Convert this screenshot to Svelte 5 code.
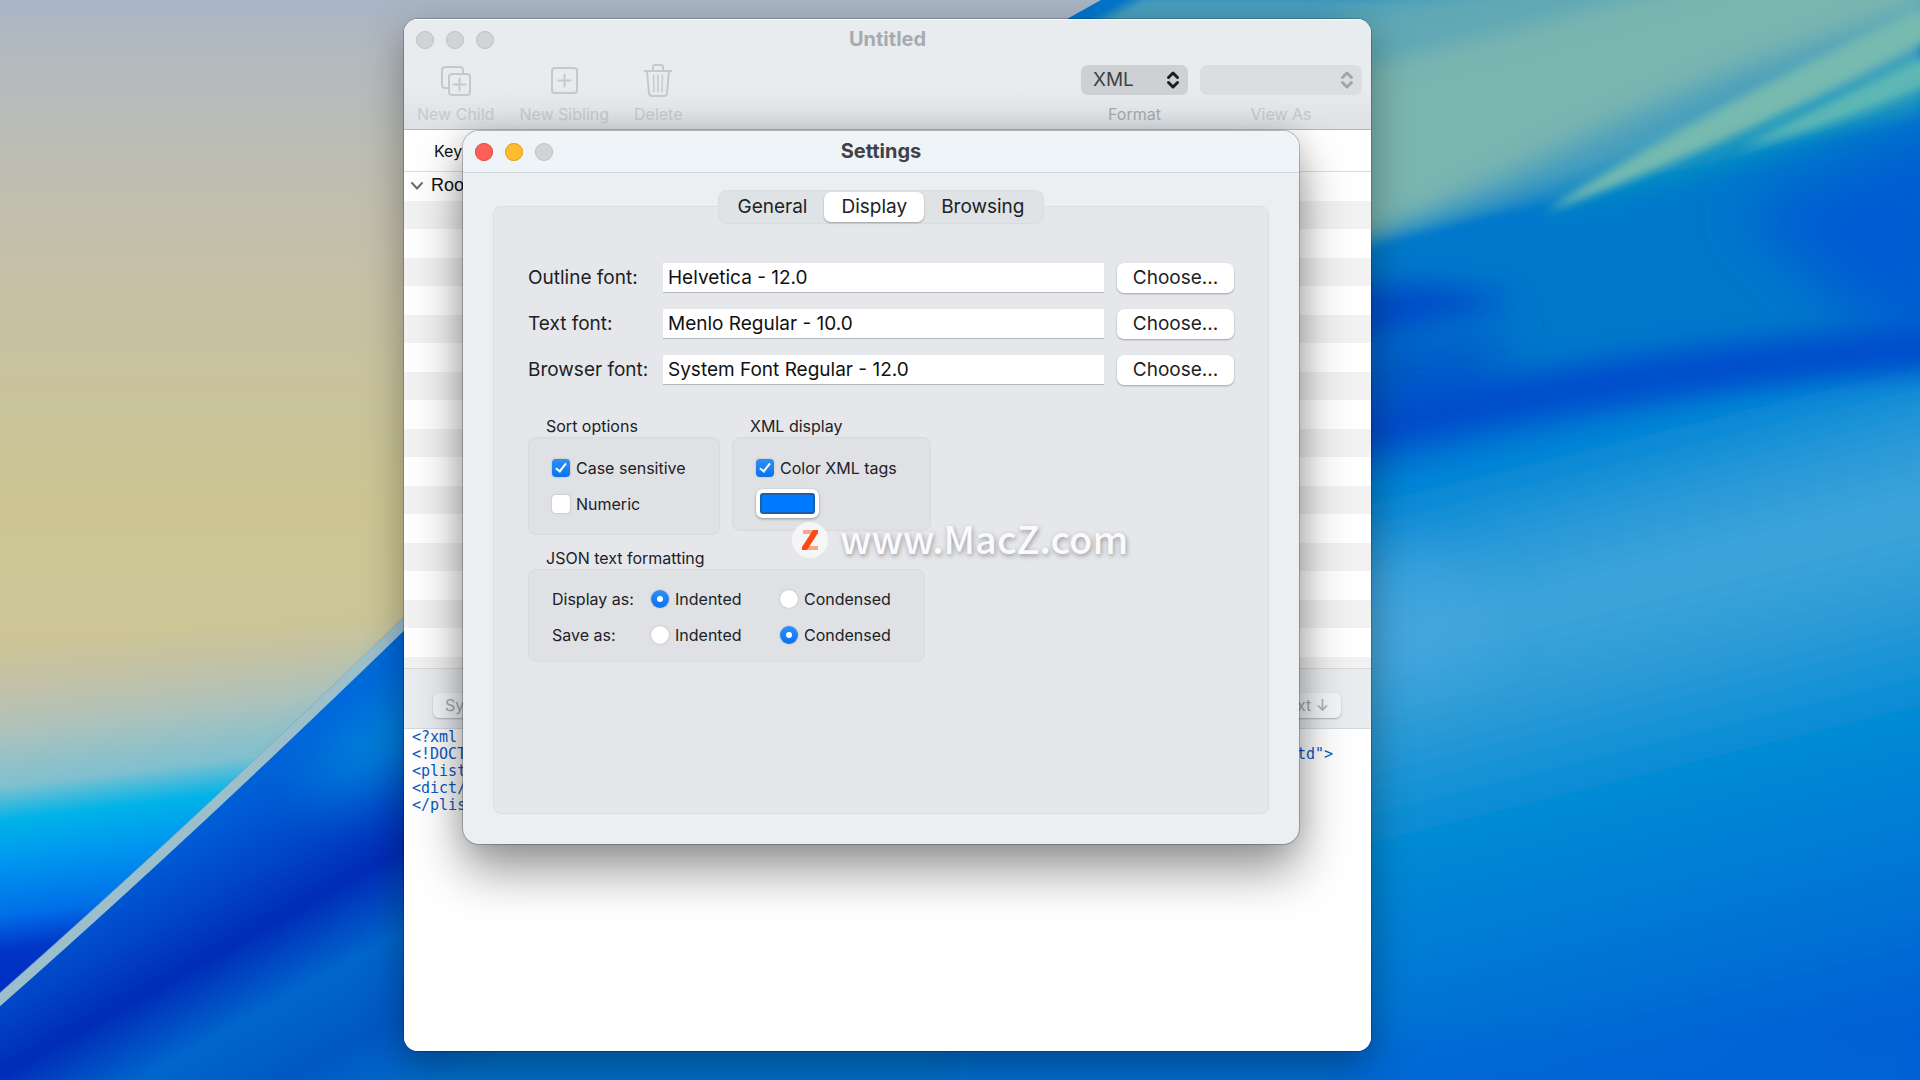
<script>
	let activeTab = 'Display';
	let format = 'XML';
	let caseSensitive = true;
	let numeric = false;
	let colorTags = true;
	let tagColor = '#007aff';

	const tabs = ['General', 'Display', 'Browsing'];

	const fonts = [
		{ id: 'outline-font', label: 'Outline font:', value: 'Helvetica - 12.0' },
		{ id: 'text-font', label: 'Text font:', value: 'Menlo Regular - 10.0' },
		{ id: 'browser-font', label: 'Browser font:', value: 'System Font Regular - 12.0' }
	];

	let jsonOptions = [
		{ name: 'display', label: 'Display as:', value: 'Indented' },
		{ name: 'save', label: 'Save as:', value: 'Condensed' }
	];

	const emptyRows = Array.from({ length: 16 });

	const source = [
		'<?xml version="1.0" encoding="UTF-8"?>',
		'<!DOCTYPE plist PUBLIC "-//Apple//DTD PLIST 1.0//EN" "http://www.apple.com/DTDs/PropertyList-1.0.dtd">',
		'<plist version="1.0">',
		'<dict/>',
		'</plist>'
	].join('\n');
</script>

<div class="desktop">
	<svg class="wallpaper" viewBox="0 0 1920 1080" preserveAspectRatio="none" aria-hidden="true">
		<defs>
			<linearGradient id="sand" x1="0" y1="0" x2="0" y2="1">
				<stop offset="0" stop-color="#a9b5c6" />
				<stop offset="0.05" stop-color="#b3b9bf" />
				<stop offset="0.14" stop-color="#bcbdb3" />
				<stop offset="0.22" stop-color="#c4bfab" />
				<stop offset="0.32" stop-color="#c8c2a0" />
				<stop offset="0.46" stop-color="#ccc593" />
				<stop offset="0.58" stop-color="#cdc596" />
				<stop offset="0.66" stop-color="#c5c1a6" />
				<stop offset="1" stop-color="#c5c1a6" />
			</linearGradient>
			<linearGradient id="pool" gradientUnits="userSpaceOnUse" x1="0" y1="650" x2="40" y2="980">
				<stop offset="0" stop-color="#c5c1a6" stop-opacity="0" />
				<stop offset="0.25" stop-color="#acc2bc" />
				<stop offset="0.41" stop-color="#7fc0d0" />
				<stop offset="0.51" stop-color="#00b3e8" />
				<stop offset="0.62" stop-color="#009aef" />
				<stop offset="0.79" stop-color="#0070e8" />
				<stop offset="0.9" stop-color="#0035c8" />
				<stop offset="1" stop-color="#002ec4" />
			</linearGradient>
			<linearGradient id="wave" gradientUnits="userSpaceOnUse" x1="130" y1="800" x2="326" y2="1150">
				<stop offset="0" stop-color="#0068dc" />
				<stop offset="0.15" stop-color="#005dd6" />
				<stop offset="0.3" stop-color="#0046c8" />
				<stop offset="0.44" stop-color="#002cb8" />
				<stop offset="0.62" stop-color="#0066cc" />
				<stop offset="0.8" stop-color="#0058c4" />
				<stop offset="1" stop-color="#0070cc" />
			</linearGradient>
			<linearGradient id="sea" gradientUnits="userSpaceOnUse" x1="1520" y1="380" x2="1700" y2="1100">
				<stop offset="0" stop-color="#0052ce" />
				<stop offset="0.1" stop-color="#0085d5" />
				<stop offset="0.2" stop-color="#2898d8" />
				<stop offset="0.3" stop-color="#3ea5d9" />
				<stop offset="0.42" stop-color="#2c9bd6" />
				<stop offset="0.58" stop-color="#0089d5" />
				<stop offset="0.8" stop-color="#0073d4" />
				<stop offset="1" stop-color="#005cd4" />
			</linearGradient>
			<filter id="soft" x="-20%" y="-50%" width="140%" height="200%">
				<feGaussianBlur stdDeviation="14" />
			</filter>
			<filter id="softer" x="-40%" y="-60%" width="180%" height="220%">
				<feGaussianBlur stdDeviation="28" />
			</filter>
			<filter id="fine" x="-20%" y="-50%" width="140%" height="200%">
				<feGaussianBlur stdDeviation="5" />
			</filter>
		</defs>
		<rect width="1920" height="1080" fill="url(#sand)" />
		<path d="M0 640 L0 1080 L500 1080 L500 590 Z" fill="url(#pool)" />
		<path d="M0 1006 Q190 834 410 618 L960 616 L960 1080 L0 1080 Z" fill="url(#wave)" />
		<path d="M420 670 L300 780 L330 800 L420 760 Z" fill="#0098dc" filter="url(#softer)" opacity="0.8" />
		<path d="M-5 1004 Q190 832 410 618" fill="none" stroke="#9bbfcb" stroke-width="10" />
		<path d="M-5 997 Q190 825 410 611" fill="none" stroke="#7aa3b4" stroke-width="1" opacity="0.6" />

		<path d="M1058 24 L1108 -4 L1920 -4 L1920 1080 L960 1080 L960 100 Z" fill="#0075cc" />
		<path d="M1092 24 L1144 -4 L1920 -4 L1920 120 L1340 250 L1098 60 Z" fill="#4a9fbd" filter="url(#fine)" />
		<path d="M1340 60 L1640 -20 L1960 -60 L1960 -4 L1740 70 L1600 130 L1340 254 Z" fill="#7ab5b0" filter="url(#soft)" />
		<path d="M1330 70 L1500 30 L1720 -30 L1560 -30 L1330 20 Z" fill="#62a9b4" filter="url(#soft)" />
		<path d="M1340 254 L1540 196 L1700 150 L1960 100 L1960 420 L1340 500 Z" fill="#0078cb" filter="url(#soft)" />
		<path d="M1530 214 Q1680 146 1950 62 L1950 92 Q1700 172 1530 214 Z" fill="#0a9cbe" filter="url(#soft)" />
		<path d="M1545 212 Q1660 132 1940 -2 L1940 34 Q1720 150 1545 212 Z" fill="#76bab0" filter="url(#fine)" />
		<path d="M1740 148 Q1840 96 1940 50 L1940 80 Q1840 126 1740 148 Z" fill="#5fb9b4" filter="url(#fine)" />
		<path d="M1330 290 L1430 284 L1520 300 L1330 350 Z" fill="#004bc8" filter="url(#soft)" />
		<path d="M1740 210 L1960 120 L1960 350 L1860 320 Z" fill="#005bd2" filter="url(#softer)" />
		<path d="M1330 350 L1500 335 L1500 400 L1330 440 Z" fill="#0055c8" filter="url(#softer)" />
		<path d="M1330 462 Q1560 376 1960 356 L1960 1100 L1330 1100 Z" fill="url(#sea)" filter="url(#soft)" />
		<path d="M1320 442 Q1580 372 1960 346" fill="none" stroke="#004ccc" stroke-width="44" filter="url(#soft)" />
		<ellipse cx="1400" cy="620" rx="90" ry="60" fill="#48a8e0" filter="url(#softer)" opacity="0.6" />
		<path d="M960 1040 L1920 1040 L1920 1090 L960 1090 Z" fill="#0068d6" filter="url(#soft)" opacity="0.6" />
	</svg>

	<section class="window main-window">
		<header class="toolbar">
			<div class="title-bar">
				<span class="lights"><i></i><i></i><i></i></span>
				<h1>Untitled</h1>
			</div>
			<div class="tools">
				<button class="tool" disabled>
					<svg width="32" height="36" viewBox="0 0 32 36">
						<path d="M8 26 H5 Q2 26 2 23 V8 Q2 5 5 5 H20 Q23 5 23 8 V11" />
						<rect x="9" y="12" width="21" height="21" rx="3" />
						<path d="M19.500 16.500 V28.500 M13.500 22.500 H25.500" />
					</svg>
					<span>New Child</span>
				</button>
				<button class="tool" disabled>
					<svg width="32" height="36" viewBox="0 0 32 36">
						<rect x="4" y="6" width="25" height="25" rx="3" />
						<path d="M16.500 12.500 V24.500 M10.500 18.500 H22.500" />
					</svg>
					<span>New Sibling</span>
				</button>
				<button class="tool" disabled>
					<svg width="32" height="36" viewBox="0 0 32 36">
						<path d="M2.500 9 H29.500 M11 9 V5 Q11 3 13 3 H19 Q21 3 21 5 V9" />
						<path d="M5 9 L7 31 Q7.200 34 10 34 H22 Q24.800 34 25 31 L27 9" />
						<path d="M11.500 13 L12 29.500 M16 13 V29.500 M20.500 13 L20 29.500" stroke-width="1.500" />
					</svg>
					<span>Delete</span>
				</button>
				<div class="picker format">
					<div class="select">
						<select id="format" bind:value={format}>
							<option>XML</option>
							<option>JSON</option>
						</select>
						<svg width="14" height="20" viewBox="0 0 14 20"><path d="M2.500 7.500 L7 3 L11.500 7.500 M2.500 12.500 L7 17 L11.500 12.500" /></svg>
					</div>
					<label for="format">Format</label>
				</div>
				<div class="picker view-as">
					<div class="select">
						<select id="view-as" disabled></select>
						<svg width="14" height="20" viewBox="0 0 14 20"><path d="M2.500 7.500 L7 3 L11.500 7.500 M2.500 12.500 L7 17 L11.500 12.500" /></svg>
					</div>
					<label for="view-as">View As</label>
				</div>
			</div>
		</header>

		<table>
			<thead>
				<tr><th>Key</th></tr>
			</thead>
			<tbody>
				<tr class="root">
					<td>
						<svg width="14" height="10" viewBox="0 0 14 10"><path d="M2 2 L7 7.500 L12 2" /></svg>Root
					</td>
				</tr>
				{#each emptyRows as _}
					<tr><td></td></tr>
				{/each}
			</tbody>
		</table>
		<div class="table-end"></div>

		<div class="splitter">
			<button disabled>Sync ↑</button>
			<button disabled>Text ↓</button>
		</div>

		<textarea aria-label="Source" wrap="off" spellcheck="false" value={source}></textarea>
	</section>

	<section class="window settings">
		<header class="title-bar">
			<span class="lights active"><i></i><i></i><i></i></span>
			<h2>Settings</h2>
		</header>

		<div class="settings-body">
			<nav class="tabs">
				{#each tabs as tab}
					<button class={activeTab === tab ? 'selected' : ''} on:click={() => (activeTab = tab)}>{tab}</button>
				{/each}
			</nav>

			<div class="panel">
				<div class="font-grid">
					{#each fonts as font}
						<label for={font.id}>{font.label}</label>
						<input id={font.id} type="text" value={font.value} readonly />
						<button>Choose...</button>
					{/each}
				</div>

				<div class="groups">
					<div class="group">
						<h3>Sort options</h3>
						<div class="box sort">
							<label><input type="checkbox" bind:checked={caseSensitive} />Case sensitive</label>
							<label><input type="checkbox" bind:checked={numeric} />Numeric</label>
						</div>
					</div>
					<div class="group">
						<h3>XML display</h3>
						<div class="box xml">
							<label><input type="checkbox" bind:checked={colorTags} />Color XML tags</label>
							<input type="color" aria-label="Tag color" bind:value={tagColor} />
						</div>
					</div>
				</div>

				<div class="group json">
					<h3>JSON text formatting</h3>
					<div class="box">
						{#each jsonOptions as option}
							<span>{option.label}</span>
							<label><input type="radio" name={option.name} value="Indented" bind:group={option.value} />Indented</label>
							<label><input type="radio" name={option.name} value="Condensed" bind:group={option.value} />Condensed</label>
						{/each}
					</div>
				</div>
			</div>
		</div>

		<div class="watermark">
			<svg width="36" height="36" viewBox="0 0 36 36">
				<circle cx="18" cy="18" r="18" fill="#f6f6f7" />
				<path d="M11 8 H26 L23 12 H11 Z M12 24 H26 V28 H10 Z" fill="#fba48d" />
				<path d="M21 8 H26 V11 L15 28 H10 V25 Z" fill="#fa4b16" />
			</svg>
			<span>www.MacZ.com</span>
		</div>
	</section>
</div>

<style>
	:global(body) {
		margin: 0;
		font-family: Inter, 'Liberation Sans', sans-serif;
		color: #202225;
	}

	button,
	input,
	select {
		font: inherit;
		color: inherit;
		margin: 0;
		box-sizing: border-box;
	}

	h1,
	h2,
	h3 {
		margin: 0;
	}

	/* The window spans columns 2-4, the settings sheet sits over column 3 */
	.desktop {
		position: relative;
		display: grid;
		grid-template-columns: 404fr 59fr minmax(0, 836fr) 72fr 549fr;
		min-height: 100vh;
		overflow: hidden;
	}

	.wallpaper {
		position: absolute;
		inset: 0;
		width: 100%;
		height: 100%;
	}

	.window {
		position: relative;
		grid-row: 1;
		min-width: 0;
	}

	.main-window {
		grid-column: 2 / 5;
		display: flex;
		flex-direction: column;
		margin: 19px 0 29px;
		border-radius: 14px;
		background: #fff;
		overflow: hidden;
		box-shadow:
			0 0 0 1px rgba(0, 0, 0, 0.2),
			0 14px 40px rgba(0, 0, 0, 0.35);
	}

	.title-bar {
		display: grid;
		grid-template-columns: 1fr auto 1fr;
		align-items: center;
		height: 42px;
		padding: 0 12px;
	}

	.title-bar h1,
	.title-bar h2 {
		padding-bottom: 2px;
		font-size: 20px;
		line-height: 24px;
		font-weight: 700;
	}

	.title-bar h1 {
		color: #a7abae;
	}

	.title-bar h2 {
		color: #3e4246;
	}

	.lights {
		display: flex;
		gap: 12px;
	}

	.lights i {
		width: 18px;
		height: 18px;
		border-radius: 50%;
		background: #d0d4d7;
		box-shadow: inset 0 0 0 1px #bfc3c6;
	}

	.lights.active i:nth-child(1) {
		background: #fe5f57;
		box-shadow: inset 0 0 0 1px #e2524b;
	}

	.lights.active i:nth-child(2) {
		background: #febc2e;
		box-shadow: inset 0 0 0 1px #e0a326;
	}

	.toolbar {
		height: 110px;
		background: linear-gradient(#e8ecef 60%, #dde1e4);
		border-bottom: 1px solid #b4b7ba;
		box-shadow: inset 0 1px #fafbfc;
	}

	.tools {
		display: flex;
		gap: 25px;
		padding: 0 9px 0 13px;
	}

	.tool {
		display: flex;
		flex-direction: column;
		align-items: center;
		gap: 5px;
		padding: 1px 0 0;
		border: 0;
		background: none;
		font-size: 16px;
		line-height: 22px;
		color: #c6cacd;
	}

	.tool svg {
		fill: none;
		stroke: #c5c9cc;
		stroke-width: 2;
		stroke-linecap: round;
		stroke-linejoin: round;
	}

	.picker {
		display: flex;
		flex-direction: column;
		align-items: center;
		gap: 8px;
		padding-top: 4px;
		font-size: 16px;
		line-height: 22px;
		color: #a5a9ac;
	}

	.format {
		width: 107px;
		margin-left: auto;
	}

	.view-as {
		width: 162px;
		margin-left: -13px;
		color: #c4c8cb;
	}

	.select {
		position: relative;
		width: 100%;
		height: 30px;
	}

	.select select {
		width: 100%;
		height: 100%;
		padding: 0 12px;
		appearance: none;
		border: 0;
		border-radius: 7px;
		background: #cdd1d4;
		color: #3d4145;
		font-size: 19px;
		opacity: 1;
	}

	.select select:disabled {
		background: #dadee1;
	}

	.select svg {
		position: absolute;
		top: 5px;
		right: 8px;
		fill: none;
		stroke: #1b1d1f;
		stroke-width: 3;
		stroke-linecap: round;
		stroke-linejoin: round;
		pointer-events: none;
	}

	.view-as .select svg {
		stroke: #a2a6a9;
	}

	table {
		width: 100%;
		border-collapse: collapse;
		color: #111;
	}

	th,
	td {
		padding: 0;
		text-align: left;
	}

	th {
		height: 41px;
		padding-left: 30px;
		border-bottom: 1px solid #dcdcdc;
		font-size: 16px;
		font-weight: 400;
	}

	td {
		height: 29px;
	}

	tbody tr:nth-child(even) td {
		height: 28px;
		background: #f2f2f2;
	}

	.root td {
		padding: 0 0 4px 6px;
		height: 25px;
		font-family: 'Liberation Sans', sans-serif;
		font-size: 18px;
		line-height: 24px;
	}

	.root svg {
		margin-right: 7px;
		fill: none;
		stroke: #6c6c6c;
		stroke-width: 2;
		stroke-linecap: round;
	}

	.table-end {
		height: 11px;
		background: #f2f2f2;
	}

	.splitter {
		display: flex;
		justify-content: space-between;
		padding: 24px 30px 10px 29px;
		border-top: 1px solid #d6d9dc;
		border-bottom: 1px solid #d6d9dc;
		background: #e9edf0;
	}

	.splitter button {
		height: 25px;
		padding: 0 12px;
		border: 0;
		border-radius: 6px;
		background: #f4f6f7;
		box-shadow: 0 1px 2px rgba(0, 0, 0, 0.25);
		font-size: 16px;
		line-height: 25px;
		color: #a7aaad;
	}

	textarea {
		flex: 1;
		min-height: 200px;
		padding: 0 8px;
		border: 0;
		outline: 0;
		resize: none;
		overflow: hidden;
		background: #fff;
		color: #0a5bc4;
		font: 15px/17px 'DejaVu Sans Mono', 'Liberation Mono', monospace;
	}

	.settings {
		grid-column: 3;
		align-self: start;
		margin-top: 131px;
		border-radius: 16px;
		background: #ebeff2;
		box-shadow:
			0 0 0 1px rgba(0, 0, 0, 0.22),
			0 26px 50px rgba(0, 0, 0, 0.42),
			0 0 26px rgba(0, 0, 0, 0.12);
	}

	.settings .title-bar {
		height: 41px;
		border-bottom: 1px solid #d2d8dd;
		border-radius: 16px 16px 0 0;
		background: #eff4f9;
	}

	.settings-body {
		display: flex;
		flex-direction: column;
		padding: 17px 30px 30px;
	}

	.tabs {
		position: relative;
		align-self: center;
		display: flex;
		margin-bottom: -18px;
		padding: 1px;
		border: 1px solid #d8dbdf;
		border-radius: 9px;
		background: #dfe3e6;
	}

	.tabs button {
		height: 30px;
		padding: 0 17px;
		border: 0;
		border-radius: 7px;
		background: none;
		font-size: 19px;
		line-height: 30px;
	}

	.tabs .selected {
		background: #fff;
		box-shadow: 0 1px 2px rgba(0, 0, 0, 0.3);
	}

	.panel {
		padding: 56px 34px 151px;
		border: 1px solid #dbdee1;
		border-radius: 8px;
		background: #e5e7eb;
	}

	.font-grid {
		display: grid;
		grid-template-columns: 122px 1fr 117px;
		gap: 16px 13px;
		font-size: 19px;
		line-height: 30px;
		white-space: nowrap;
	}

	.font-grid input {
		width: 100%;
		height: 30px;
		padding: 0 5px;
		border: 0;
		border-bottom: 1px solid #b4b5b8;
		background: #fff;
		color: #111;
		outline: 0;
	}

	.font-grid button {
		height: 30px;
		padding: 0;
		border: 0;
		border-radius: 7px;
		background: #fff;
		box-shadow: 0 1px 2px rgba(0, 0, 0, 0.3);
	}

	.groups {
		display: flex;
		align-items: flex-start;
		gap: 12px;
		margin-top: 30px;
	}

	.group {
		font-size: 16px;
		line-height: 22px;
	}

	.group h3 {
		padding-left: 18px;
		font-size: 16px;
		line-height: 22px;
		font-weight: 400;
	}

	.box {
		box-sizing: border-box;
		padding: 19px 23px;
		border: 1px solid #d8dade;
		border-radius: 8px;
		background: #dfe1e4;
	}

	.sort,
	.xml {
		display: flex;
		flex-direction: column;
		align-items: flex-start;
		gap: 14px;
	}

	.sort {
		width: 192px;
	}

	.xml {
		width: 199px;
		gap: 10px;
		padding-bottom: 12px;
	}

	.box label {
		display: flex;
		align-items: center;
		gap: 6px;
		white-space: nowrap;
	}

	.json {
		width: 397px;
		margin-top: 12px;
	}

	.json .box {
		display: grid;
		grid-template-columns: 99px 129px auto;
		row-gap: 14px;
		padding: 18px 23px 15px;
	}

	input[type='checkbox'],
	input[type='radio'] {
		position: relative;
		width: 18px;
		height: 18px;
		appearance: none;
		border-radius: 4px;
		background: #fff;
		box-shadow: 0 0 2px rgba(0, 0, 0, 0.25);
	}

	input[type='radio'] {
		border-radius: 50%;
	}

	input[type='checkbox']:checked,
	input[type='radio']:checked {
		background: linear-gradient(#2c8ffb, #0a73ec);
	}

	input[type='checkbox']:checked::before {
		content: '';
		position: absolute;
		top: 2px;
		left: 6px;
		width: 4px;
		height: 9px;
		border: solid #fff;
		border-width: 0 2px 2px 0;
		transform: rotate(38deg);
	}

	input[type='radio']:checked::before {
		content: '';
		position: absolute;
		inset: 6px;
		border-radius: 50%;
		background: #fff;
	}

	input[type='color'] {
		width: 63px;
		height: 29px;
		padding: 4px;
		border: 0;
		border-radius: 7px;
		background: #fff;
		box-shadow: 0 1px 3px rgba(0, 0, 0, 0.35);
	}

	input[type='color']::-webkit-color-swatch-wrapper {
		padding: 0;
	}

	input[type='color']::-webkit-color-swatch {
		border: 2px solid #1d5ea8;
		border-radius: 3px;
	}

	.watermark {
		position: absolute;
		top: 391px;
		left: 329px;
		display: flex;
		align-items: center;
		gap: 12px;
		height: 36px;
		pointer-events: none;
		color: #fafafb;
		font-family: 'Noto Sans CJK SC', sans-serif;
		font-size: 38px;
		font-weight: 500;
		text-shadow: 1px 2px 5px rgba(0, 0, 0, 0.35);
	}

	.watermark span {
		padding-bottom: 5px;
	}
</style>
